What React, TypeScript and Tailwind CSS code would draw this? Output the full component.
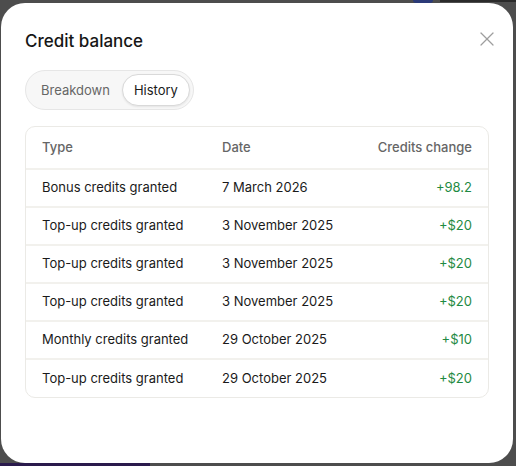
import { X } from 'lucide-react'

const rows = [
  { type: 'Bonus credits granted', date: '7 March 2026', change: '+98.2' },
  { type: 'Top-up credits granted', date: '3 November 2025', change: '+$20' },
  { type: 'Top-up credits granted', date: '3 November 2025', change: '+$20' },
  { type: 'Top-up credits granted', date: '3 November 2025', change: '+$20' },
  { type: 'Monthly credits granted', date: '29 October 2025', change: '+$10' },
  { type: 'Top-up credits granted', date: '29 October 2025', change: '+$20' },
]

export default function App() {
  return (
    <div className="relative h-[466px] w-[516px] overflow-hidden bg-[#4d4d4d] font-['Inter',sans-serif]">
      {/* backdrop bits peeking out behind the dialog */}
      <div className="absolute top-0 left-[413px] h-[3px] w-[20px] rounded-b-[3px] bg-[#2b3a78]" />
      <div className="absolute top-0 left-[440px] h-[2px] w-[76px] bg-[#2a2a2a]" />
      <div className="absolute bottom-0 left-0 h-[3px] w-[150px] bg-[#2a1a4c]" />

      <div className="relative ml-[1px] mt-[3px] flex h-[460px] w-[512px] flex-col rounded-[24px] bg-white px-6 pt-[25px]">
        <button
          className="absolute top-[24px] right-[14px] text-[#9e9e9e]"
          type="button"
        >
          <X size={24} strokeWidth={1.2} />
        </button>

        <h2 className="text-[17px] leading-[26px] font-medium text-[#161616]">
          Credit balance
        </h2>

        <div className="mt-[16px] flex w-fit items-center rounded-full border border-[#e6e6e6] bg-[#f7f7f7] p-[3px] pl-[15px]">
          <span className="mr-[12px] text-[13px] leading-[20px] text-[#666]">Breakdown</span>
          <span className="rounded-full border border-[#d9d9d9] bg-white px-[11px] py-[5px] text-[13px] leading-[20px] text-[#1a1a1a] shadow-[0_1px_2px_rgba(0,0,0,0.08)]">
            History
          </span>
        </div>

        <div className="mt-[16px] overflow-hidden rounded-[10px] border border-[#ebeae6]">
          <div className="grid h-[43px] grid-cols-[180px_1fr_auto] items-center border-b-2 border-[#f2f1ed] px-4 text-[13px] font-medium text-[#666]">
            <span>Type</span>
            <span>Date</span>
            <span className="text-right">Credits change</span>
          </div>
          {rows.map((row, i) => (
            <div
              key={i}
              className={`grid grid-cols-[180px_1fr_auto] items-center px-4 text-[13px] text-[#1a1a1a] ${
                i < rows.length - 1 ? 'h-[38px] border-b-2 border-[#f2f1ed]' : 'h-[37px]'
              }`}
            >
              <span>{row.type}</span>
              <span>{row.date}</span>
              <span className="text-right text-[#1f8a43]">{row.change}</span>
            </div>
          ))}
        </div>
      </div>
    </div>
  )
}
